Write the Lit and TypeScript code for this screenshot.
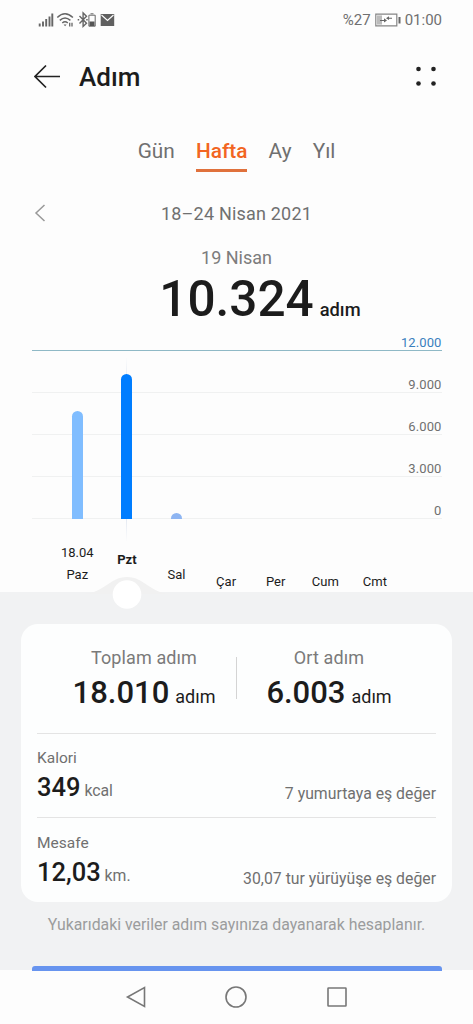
import { LitElement, html, css, svg } from 'lit';
import { customElement, property } from 'lit/decorators.js';

const DAYS = [
  { name: 'Paz', date: '18.04', height: 108, cls: 'near' },
  { name: 'Pzt', date: '', height: 145, cls: 'selected' },
  { name: 'Sal', date: '', height: 6, cls: 'near low' },
  { name: 'Çar', date: '', height: 0, cls: '' },
  { name: 'Per', date: '', height: 0, cls: '' },
  { name: 'Cum', date: '', height: 0, cls: '' },
  { name: 'Cmt', date: '', height: 0, cls: '' },
];

@customElement('status-bar')
export class StatusBar extends LitElement {

  static styles = css`
    :host{
      display:flex;
      justify-content:space-between;
      align-items:center;
      height:40px;
      padding:0 31px 0 38px;
      box-sizing:border-box;
      color:#707070;
      font-size:15px
    }
    svg{
      display:block
    }
    .right{
      display:flex;
      align-items:center;
      gap:4px
    }
  `;

  render() {
    return html`
      <svg width="78" height="20" viewBox="38 10 78 20" fill="none" stroke="#666">
        <path d="M39.7 23.5v3M43 21.5v5M46.2 19v7.5M49.5 16.5v10M52.3 13.5v13" stroke-width="1.9"/>
        <path d="M57.3 17.5Q65 10 72.9 17.5M59.8 20.4Q65 15.600 70.400 20.4M62.3 23Q65 20.5 67.8 23" stroke-width="1.5"/>
        <path d="M63.6 24.5h3l-1.500 1.700z" fill="#666" stroke="none"/>
        <path d="M69.700 22.700v3.800M72 22.700v3.800" stroke-width="1.300"/>
        <path d="M79.500 16l7 7.300-3.400 3.200v-13.500l3.400 3.300-7 7.200" stroke-width="1.400"/>
        <path d="M77.700 19.700h1.500M86.200 19.700h1.500" stroke-width="1.500"/>
        <path d="M88.900 15.200h6.300v11h-6.300zM90.500 13.800h3" stroke-width="1"/>
        <path d="M89.500 21.500h5v4.500h-5z" fill="#555" stroke="none"/>
        <path d="M100.700 14h13.500v12h-13.500z" fill="#606060" stroke="none"/>
        <path d="M101.500 15l6 5.500 6-5.500" stroke="#fff" stroke-width="1.100"/>
      </svg>
      <div class="right">
        <span>%27</span>
        <svg width="26" height="14" viewBox="0 0 26 14">
          <path d="M.8 1.200h21v11.600h-21z" fill="#fff" stroke="#858585" stroke-width="1.200"/>
          <path d="M2 2.400h5v9.200h-5z" fill="#bbb"/>
          <path d="M5 7h4v-1.800l3 2.200-3 2.200v-1.600h-4zM17 4.700h-3v-1.500l-3 2 3 1.700v-1.200h3z" fill="#666"/>
          <path d="M23.500 4h2v6.500h-2z" fill="#666"/>
        </svg>
        <span>01:00</span>
      </div>
    `;
  }

}

@customElement('step-chart')
export class StepChart extends LitElement {

  static styles = css`
    :host{
      display:grid;
      grid-template-columns:100%;
      height:264px
    }
    .grid, .bars{
      grid-area:1 / 1
    }
    .grid{
      padding:0 31.500px
    }
    .line{
      height:42px;
      box-sizing:border-box;
      border-bottom:1px solid #f0f1f1;
      color:#707070;
      font-size:13px;
      line-height:17px;
      letter-spacing:.1px;
      text-align:right;
      padding-top:25px
    }
    .line.goal{
      height:22px;
      padding-top:5px;
      border-color:#8fb9c6;
      color:#3a80bd
    }
    .bars{
      display:grid;
      grid-template-columns:repeat(7, 49.600px);
      padding-left:52.500px;
      z-index:2
    }
    .day{
      display:grid;
      grid-template-rows:190px 74px;
      justify-items:center
    }
    .bar{
      align-self:end;
      width:11px;
      border-radius:5.500px 5.500px 0 0
    }
    .near .bar{
      background:#80bdff
    }
    .low .bar{
      background:#8eb5f2
    }
    .selected .bar{
      background:#007dff
    }
    .selected{
      background:linear-gradient(#fff0, #dfe5ef 15%, #dfe5ef 85%, #fff0) center 28px / 1px 185px no-repeat
    }
    .label{
      display:flex;
      flex-direction:column;
      justify-content:flex-end;
      align-items:center;
      padding-bottom:2px;
      font-size:13px;
      line-height:18px;
      gap:4.500px;
      color:#1c1c1c
    }
    .near .label{
      padding-bottom:9px
    }
    .selected .label{
      padding-bottom:24px;
      font-weight:700
    }
    .marker{
      grid-area:1 / 1;
      align-self:end;
      position:relative;
      z-index:1;
      margin:0 0 -19px 82px
    }
  `;

  render() {
    return html`
      <div class="grid">
        <div class="line goal">12.000</div>
        <div class="line">9.000</div>
        <div class="line">6.000</div>
        <div class="line">3.000</div>
        <div class="line">0</div>
      </div>
      <svg class="marker" width="90" height="38" viewBox="0 0 90 38">
        <path d="M0 20C22 20 27 3 45 3S68 20 90 20z" fill="#f1f1f1"/>
        <circle cx="45" cy="20.500" r="14.300" fill="#fff"/>
      </svg>
      <div class="bars">
        ${DAYS.map(day => html`
          <div class="day ${day.cls}">
            <div class="bar" style="height:${day.height}px"></div>
            <div class="label">
              ${day.date ? html`<span>${day.date}</span>` : ''}
              <span>${day.name}</span>
            </div>
          </div>
        `)}
      </div>
    `;
  }

}

@customElement('detail-row')
export class DetailRow extends LitElement {

  @property() label = '';
  @property() value = '';
  @property() unit = '';
  @property() note = '';

  static styles = css`
    :host{
      display:flex;
      justify-content:space-between;
      align-items:flex-end;
      height:84.300px;
      box-sizing:border-box;
      padding-bottom:14px;
      border-top:1px solid #e4e4e4;
      color:#707070;
      font-size:15.800px
    }
    .label{
      line-height:20px;
      font-size:15.500px
    }
    .amount{
      line-height:34px;
      margin:2px 0 -5px
    }
    b{
      color:#1c1c1c;
      font-size:25.500px;
      font-weight:500
    }
    .note{
      line-height:20px;
      margin-bottom:-1px
    }
  `;

  render() {
    return html`
      <div>
        <div class="label">${this.label}</div>
        <div class="amount"><b>${this.value}</b> <span>${this.unit}</span></div>
      </div>
      <div class="note">${this.note}</div>
    `;
  }

}

@customElement('app-root')
export class AppRoot extends LitElement {

  static styles = css`
    :host{
      display:flex;
      flex-direction:column;
      width:473px;
      height:1024px;
      overflow:hidden;
      background:#fdfdfd;
      color:#1c1c1c;
      font-family:Roboto, sans-serif
    }
    header{
      display:flex;
      align-items:center;
      height:74px;
      padding:0 36px 0 34px
    }
    h1{
      flex:1;
      margin:0 0 0 19px;
      font-size:26px;
      font-weight:500
    }
    svg{
      display:block
    }
    .tabs{
      display:flex;
      justify-content:center;
      gap:21.200px;
      height:36px;
      margin-top:22px;
      box-sizing:border-box;
      font-size:20.800px;
      line-height:30px;
      color:#707070
    }
    .tab.active{
      color:#f26522;
      font-weight:500;
      border-bottom:3px solid #e0713c;
      box-sizing:border-box
    }
    .period{
      display:grid;
      grid-template-columns:60px 1fr 60px;
      align-items:center;
      height:28px;
      margin-top:27px;
      text-align:center;
      font-size:18px;
      letter-spacing:.2px;
      color:#707070
    }
    .period svg{
      margin-left:34px
    }
    .date{
      margin-top:18px;
      line-height:25px;
      text-align:center;
      font-size:18px;
      color:#7c7c7c
    }
    .steps{
      display:grid;
      grid-template-columns:1fr auto 1fr;
      align-items:baseline;
      height:58px;
      font-weight:500
    }
    .count{
      grid-column:2;
      font-size:49.500px;
      line-height:59px
    }
    .steps .unit{
      margin-left:6px;
      font-size:18.300px
    }
    step-chart{
      margin-top:1px;
      flex:none
    }
    .sheet{
      height:378px;
      flex:none;
      box-sizing:border-box;
      padding:32px 21px 0;
      margin-top:-1px;
      background:#f1f2f3
    }
    .card{
      height:278px;
      box-sizing:border-box;
      padding:0 16px;
      border-radius:17px;
      background:#fdfefe
    }
    .totals{
      display:grid;
      grid-template-columns:1fr 1px 1fr;
      height:109px;
      padding:0 15px;
      text-align:center
    }
    .rule{
      height:42px;
      margin-top:33px;
      background:#d4d4d4
    }
    .total{
      padding-top:22px;
      font-size:18px;
      line-height:24px
    }
    .total .name{
      color:#7a7a7a;
      letter-spacing:.1px
    }
    .total .value{
      line-height:46px;
      word-spacing:1.500px
    }
    .total b{
      font-size:31px;
      font-weight:500
    }
    .info{
      margin-top:13px;
      line-height:20px;
      text-align:center;
      font-size:15.850px;
      color:#9b9c9d
    }
    .more{
      width:410px;
      height:5px;
      margin:-4px auto 0;
      border-radius:3px 3px 0 0;
      background:#6794ef;
      flex:none
    }
    nav{
      display:flex;
      justify-content:center;
      align-items:center;
      gap:78.500px;
      padding:15px 1px 0 0
    }
  `;

  render() {
    return html`
      <status-bar></status-bar>
      <header>
        ${this.backIcon()}
        <h1>Adım</h1>
        ${this.menuIcon()}
      </header>
      <div class="tabs">
        <div class="tab">Gün</div>
        <div class="tab active">Hafta</div>
        <div class="tab">Ay</div>
        <div class="tab">Yıl</div>
      </div>
      <div class="period">
        <svg width="12" height="18" viewBox="0 0 12 18" fill="none" stroke="#999" stroke-width="1.500">
          <path d="M10.500 1L2 9l8.500 8"/>
        </svg>
        <span>18–24 Nisan 2021</span>
      </div>
      <div class="date">19 Nisan</div>
      <div class="steps">
        <span class="count">10.324</span>
        <span class="unit">adım</span>
      </div>
      <step-chart></step-chart>
      <div class="sheet">
        <div class="card">
          <div class="totals">
            <div class="total">
              <div class="name">Toplam adım</div>
              <div class="value"><b>18.010</b> adım</div>
            </div>
            <div class="rule"></div>
            <div class="total">
              <div class="name">Ort adım</div>
              <div class="value"><b>6.003</b> adım</div>
            </div>
          </div>
          <detail-row label="Kalori" value="349" unit="kcal" note="7 yumurtaya eş değer"></detail-row>
          <detail-row label="Mesafe" value="12,03" unit="km." note="30,07 tur yürüyüşe eş değer"></detail-row>
        </div>
        <div class="info">Yukarıdaki veriler adım sayınıza dayanarak hesaplanır.</div>
      </div>
      <div class="more"></div>
      <nav>
        ${this.navIcon(svg`<path d="M19.500 1.500v19L2.500 11z"/>`)}
        ${this.navIcon(svg`<circle cx="11" cy="11" r="10"/>`)}
        ${this.navIcon(svg`<rect x="2" y="2" width="18" height="18" rx=".5"/>`)}
      </nav>
    `;
  }

  backIcon(){
    return html`
      <svg width="26" height="26" viewBox="0 0 26 26" fill="none" stroke="#222" stroke-width="1.700">
        <path d="M26 12.500H1.500M12 1.500L1 12.500l11 11"/>
      </svg>
    `;
  }

  menuIcon(){
    return html`
      <svg width="22" height="22" viewBox="0 0 22 22" fill="#222">
        <circle cx="3.500" cy="3" r="2.300"/>
        <circle cx="18.500" cy="3" r="2.300"/>
        <circle cx="3.500" cy="17.500" r="2.300"/>
        <circle cx="18.500" cy="17.500" r="2.300"/>
      </svg>
    `;
  }

  navIcon(shape: unknown){
    return html`
      <svg width="22" height="22" viewBox="0 0 22 22" fill="none" stroke="#777" stroke-width="1.600">${shape}</svg>
    `;
  }

}
